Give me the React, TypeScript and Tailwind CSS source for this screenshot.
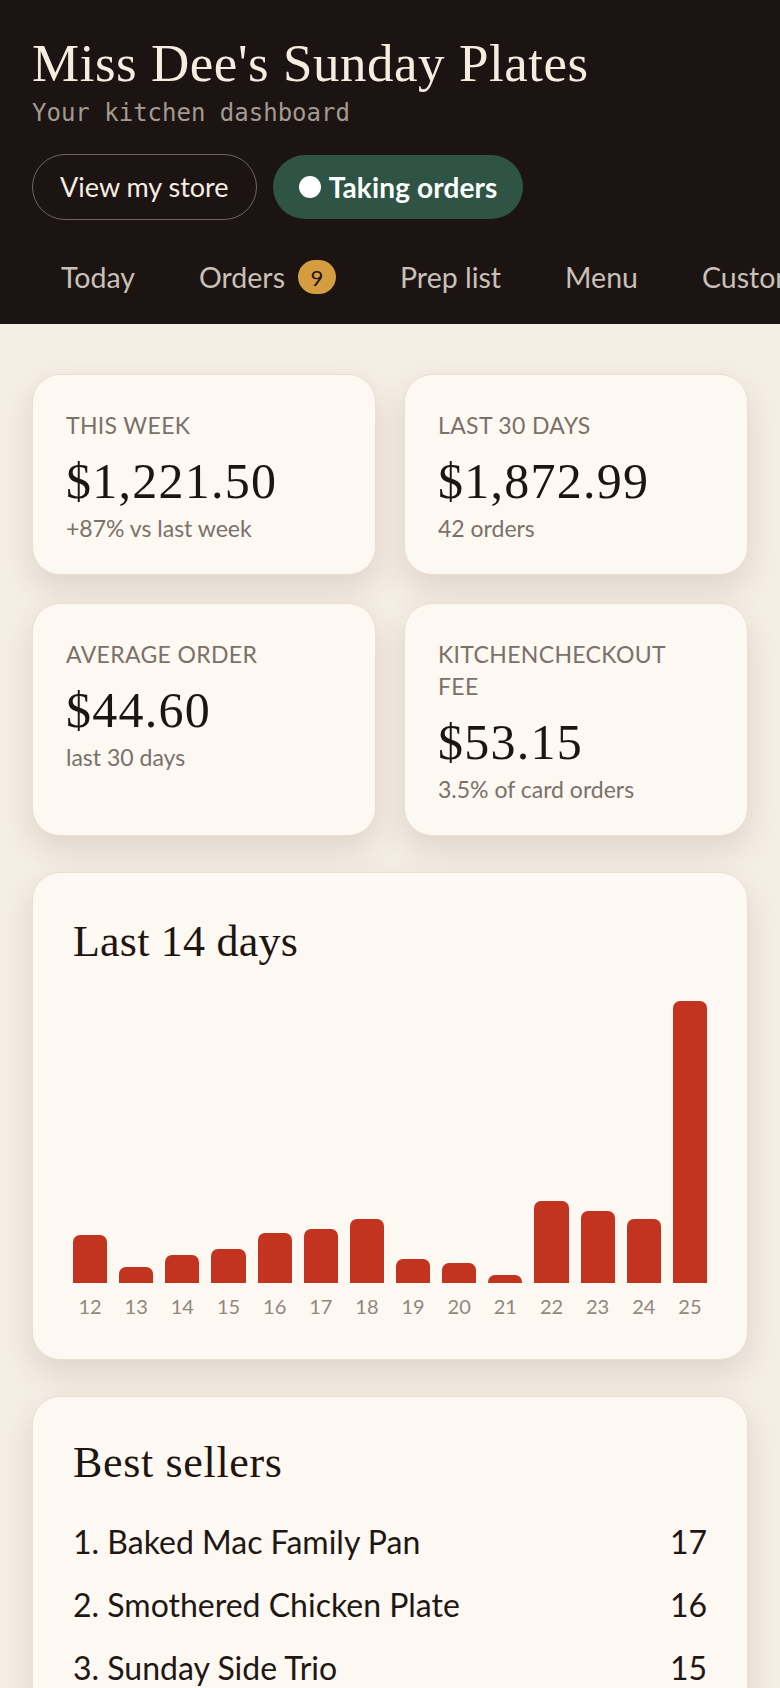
import React from "react";

const serif = { fontFamily: '"Liberation Serif", "Times New Roman", serif' };

const stats = [
  { label: "This week", value: "$1,221.50", note: "+87% vs last week" },
  { label: "Last 30 days", value: "$1,872.99", note: "42 orders" },
  { label: "Average order", value: "$44.60", note: "last 30 days" },
  { label: "KitchenCheckout fee", value: "$53.15", note: "3.5% of card orders" },
];

const days = [
  { day: 12, total: 48 },
  { day: 13, total: 16 },
  { day: 14, total: 28 },
  { day: 15, total: 34 },
  { day: 16, total: 50 },
  { day: 17, total: 54 },
  { day: 18, total: 64 },
  { day: 19, total: 24 },
  { day: 20, total: 20 },
  { day: 21, total: 8 },
  { day: 22, total: 82 },
  { day: 23, total: 72 },
  { day: 24, total: 64 },
  { day: 25, total: 282 },
];

const sellers = [
  { name: "Baked Mac Family Pan", count: 17 },
  { name: "Smothered Chicken Plate", count: 16 },
  { name: "Sunday Side Trio", count: 15 },
  { name: "Peach Cobbler Slice", count: 12 },
];

const tabs = ["Today", "Orders", "Prep list", "Menu", "Customers", "Settings"];

const cardClass =
  "rounded-[28px] border border-[#e9dfd1] bg-[#fdf8f1] shadow-[0_14px_32px_rgba(70,50,30,0.13)]";

export default function App() {
  const max = Math.max(...days.map((d) => d.total));
  return (
    <div
      className="min-h-screen bg-[#f5eee4] text-[#1d1512]"
      style={{ fontFamily: 'Lato, "Noto Sans", sans-serif' }}
    >
      <header className="bg-[#1c1412] pt-[34px] pb-[30px] overflow-hidden">
        <div className="px-8">
          <h1
            className="text-[53px] leading-[1.1] tracking-[0.01em] text-[#f6ede0]"
            style={serif}
          >
            Miss Dee's Sunday Plates
          </h1>
          <p
            className="mt-[6px] text-[24px] leading-[30px] text-[#a39a91]"
            style={{ fontFamily: '"DejaVu Sans Mono", "Liberation Mono", monospace' }}
          >
            Your kitchen dashboard
          </p>
          <div className="mt-[26px] flex items-center gap-4">
            <button className="h-[66px] rounded-full border-[1.5px] border-[#6e6560] px-[27px] text-[27px] text-[#f6ede0]">
              View my store
            </button>
            <button className="flex h-[64px] items-center gap-2 rounded-full bg-[#2f5446] pl-[26px] pr-[25px] text-[28px] font-bold tracking-[0.005em] text-white">
              <span className="h-[22px] w-[22px] rounded-full bg-white" />
              Taking orders
            </button>
          </div>
        </div>
        <nav className="mt-[40px] flex gap-[6px] whitespace-nowrap overflow-hidden px-8">
          {tabs.map((t) => (
            <a
              key={t}
              href="#"
              className="flex shrink-0 items-center gap-[13px] px-[29px] text-[28.5px] leading-[1.15] text-[#c9c0b7]"
            >
              {t}
              {t === "Orders" && (
                <span className="flex h-[34px] w-[38px] items-center justify-center rounded-full bg-[#d49d40] text-[22px] text-[#1c1412]">
                  9
                </span>
              )}
            </a>
          ))}
        </nav>
      </header>

      <main className="flex flex-col gap-9 px-8 pt-[50px] pb-10">
        <div className="grid grid-cols-2 gap-7">
          {stats.map((s) => (
            <div key={s.label} className={`${cardClass} px-[33px] pt-[34px] pb-[31px]`}>
              <div className="max-w-[262px] text-[23px] uppercase leading-[32px] tracking-[0.015em] text-[#7a716b]">
                {s.label}
              </div>
              <div
                className="mt-[12px] text-[50px] leading-[56px] tracking-[0.025em]"
                style={serif}
              >
                {s.value}
              </div>
              <div className="mt-1 text-[23px] leading-[30px] text-[#7a716b]">{s.note}</div>
            </div>
          ))}
        </div>

        <section className={`${cardClass} px-10 pt-[44px] pb-[40px]`}>
          <h2 className="text-[44px] leading-[50px] tracking-[0.005em]" style={serif}>
            Last 14 days
          </h2>
          <div className="mt-[34px] flex h-[282px] items-end gap-3">
            {days.map((d) => (
              <div
                key={d.day}
                className="flex-1 rounded-t-[7px] bg-[#c2341f]"
                style={{ height: `${(d.total / max) * 100}%` }}
              />
            ))}
          </div>
          <div className="mt-[10px] flex gap-3">
            {days.map((d) => (
              <div
                key={d.day}
                className="flex-1 text-center text-[20px] leading-[26px] text-[#8f8780]"
              >
                {d.day}
              </div>
            ))}
          </div>
        </section>

        <section className={`${cardClass} px-10 pt-[41px] pb-10`}>
          <h2 className="text-[44px] leading-[50px] tracking-[0.015em]" style={serif}>
            Best sellers
          </h2>
          <ol className="mt-[22px]">
            {sellers.map((s, i) => (
              <li
                key={s.name}
                className="flex justify-between text-[32px] leading-[63px] text-[#1f1714]"
              >
                <span>
                  {i + 1}. {s.name}
                </span>
                <span>{s.count}</span>
              </li>
            ))}
          </ol>
        </section>
      </main>
    </div>
  );
}
